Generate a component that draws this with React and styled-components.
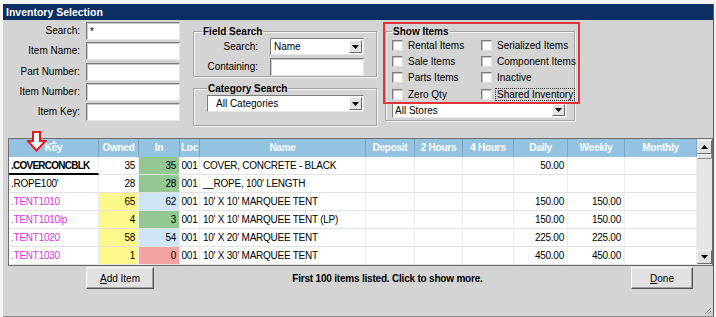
import React from "react";
import styled, { createGlobalStyle } from "styled-components";

const GlobalStyle = createGlobalStyle`
  html, body { margin: 0; padding: 0; background: #f3f3f3; }
  body { font-family: "Liberation Sans", Arial, sans-serif; font-size: 10px; color: #000; }
  * { box-sizing: border-box; }
`;

const Window = styled.div`
  margin: 4px 0 0 3px;
  width: 711px;
  height: 313px;
  background: #d4d4d4;
  border-right: 1px solid #5a5a5a;
  border-bottom: 1px solid #8a8a8a;
  display: flex;
  flex-direction: column;
  position: relative;
`;

const TitleBar = styled.div`
  height: 16px;
  background: #0b2f63;
  color: #fff;
  font-weight: bold;
  font-size: 10.5px;
  line-height: 16px;
  padding-left: 3px;
`;

const TopArea = styled.div`
  display: flex;
  align-items: flex-start;
  padding-top: 2px;
  height: 113px;
`;

const LeftFields = styled.div`
  display: grid;
  grid-template-columns: 77px 94px;
  grid-auto-rows: 18px;
  column-gap: 6px;
  row-gap: 2.3px;
  align-items: center;
`;

const Label = styled.label`
  text-align: right;
  white-space: nowrap;
  line-height: 12px;
`;

const TextBox = styled.input`
  display: block;
  width: 100%;
  height: ${(p) => p.$h || 18}px;
  margin: 0;
  padding: 0 3px;
  font: inherit;
  background: #fff;
  border: 1px solid;
  border-color: #7c7c7c #e6e6e6 #e6e6e6 #7c7c7c;
  box-shadow: inset 1px 1px 0 #c8c8c8;
  outline: none;
`;

const Column = styled.div`
  display: flex;
  flex-direction: column;
  margin-left: ${(p) => p.$ml}px;
  width: ${(p) => p.$w}px;
  position: relative;
`;

const GroupBox = styled.fieldset`
  margin: ${(p) => p.$mt || 0}px 0 0 0;
  padding: ${(p) => p.$pad};
  border: 1px solid #a3a3a3;
  box-shadow: 1px 1px 0 #f4f4f4, inset 1px 1px 0 #f4f4f4;
  min-width: 0;
`;

const Legend = styled.legend`
  font-weight: bold;
  padding: 0 1px;
  line-height: 11px;
`;

const FieldGrid = styled.div`
  display: grid;
  grid-template-columns: 56px 94px;
  grid-template-rows: 17px 18px;
  column-gap: 12px;
  row-gap: 3px;
  align-items: center;
`;

const SelectBox = styled.div`
  width: ${(p) => p.$w}px;
  height: ${(p) => p.$h || 17}px;
  background: #fff;
  border: 1px solid;
  border-color: #7c7c7c #e6e6e6 #e6e6e6 #7c7c7c;
  display: flex;
  align-items: center;
  justify-content: space-between;
  padding: 0 1px 0 ${(p) => p.$pl || 3}px;
`;

const DropButton = styled.span`
  width: 13px;
  height: calc(100% - 2px);
  background: #e2e2e2;
  border: 1px solid;
  border-color: #fafafa #6a6a6a #6a6a6a #fafafa;
  display: flex;
  align-items: center;
  justify-content: center;
`;

const CheckGrid = styled.div`
  display: grid;
  grid-template-columns: 89px 1fr;
  grid-auto-rows: 16.3px;
  align-items: center;
`;

const CheckItem = styled.div`
  display: flex;
  align-items: center;
  gap: 4px;
  white-space: nowrap;
`;

const Box = styled.span`
  width: 11px;
  height: 11px;
  background: #fff;
  border: 1px solid;
  border-color: #7c7c7c #e0e0e0 #e0e0e0 #7c7c7c;
  box-shadow: inset 1px 1px 0 #c4c4c4;
  flex: none;
`;

const CheckText = styled.span`
  outline: ${(p) => (p.$focus ? "1px dotted #333" : "none")};
  padding: 0 1px;
`;

const RedFrame = styled.div`
  position: absolute;
  left: -2px;
  top: 0;
  width: 197px;
  height: 82px;
  border: 2px solid #e2323a;
  pointer-events: none;
`;

const GridPanel = styled.div`
  margin: 5px 0 0 5px;
  width: 705px;
  height: 128px;
  border: 1px solid #6d6d6d;
  background: #fff;
  display: flex;
  position: relative;
  letter-spacing: -0.25px;
`;

const Table = styled.div`
  flex: 1;
  display: flex;
  flex-direction: column;
`;

const cols = "90px 40px 41px 20px 166px 49px 48px 51px 54px 57px 72px";

const HeaderRow = styled.div`
  display: grid;
  grid-template-columns: ${cols};
  height: 18px;
  background: #93c3e0;
`;

const HeaderCell = styled.div`
  color: #fff;
  font-weight: bold;
  text-align: center;
  line-height: 18px;
  border-right: 1px solid #7aa3bf;
  white-space: nowrap;
  overflow: hidden;
  position: relative;
`;

const Row = styled.div`
  display: grid;
  grid-template-columns: ${cols};
  height: 18px;
`;

const Cell = styled.div`
  line-height: 17px;
  border-right: 1px solid #ececec;
  border-bottom: ${(p) => (p.$underline ? "2px solid #000" : "1px solid #e2e2e2")};
  background: ${(p) => p.$bg || "transparent"};
  color: ${(p) => p.$color || "#000"};
  font-weight: ${(p) => (p.$bold ? "bold" : "normal")};
  letter-spacing: ${(p) => (p.$bold ? "-0.75px" : "inherit")};
  text-align: ${(p) => p.$align || "left"};
  padding: ${(p) =>
    p.$align === "right" ? "0 3px 0 0" : p.$align === "center" ? "0" : `0 0 0 ${p.$pl || 3}px`};
  white-space: nowrap;
  overflow: hidden;
`;

const Scrollbar = styled.div`
  width: 15px;
  background: #e6e6e6;
  display: flex;
  flex-direction: column;
  justify-content: space-between;
  padding: 1px 0;
`;

const ScrollTop = styled.div`
  display: flex;
  flex-direction: column;
`;

const ScrollButton = styled.div`
  height: 14px;
  background: #e0e0e0;
  border: 1px solid;
  border-color: #fafafa #6a6a6a #6a6a6a #fafafa;
  display: flex;
  align-items: center;
  justify-content: center;
`;

const Thumb = styled.div`
  height: 5px;
  background: #e4e4e4;
  border: 1px solid;
  border-color: #fafafa #8a8a8a #8a8a8a #fafafa;
`;

const SortArrow = styled.svg`
  position: absolute;
  left: 42px;
  top: 1px;
`;

const RedArrow = styled.svg`
  position: absolute;
  left: 18px;
  top: -8px;
`;

const Footer = styled.div`
  display: flex;
  align-items: center;
  padding: 1px 20px 0 83px;
`;

const Button = styled.button`
  width: ${(p) => p.$w}px;
  height: 22px;
  font: inherit;
  background: #e1e1e1;
  border: 1px solid;
  border-color: #fdfdfd #555 #555 #fdfdfd;
  box-shadow: inset -1px -1px 0 #a0a0a0;
  padding: 0;
  color: #000;
`;

const Status = styled.div`
  flex: 1;
  text-align: center;
  font-weight: bold;
  margin-right: 10px;
  letter-spacing: -0.2px;
`;

const Grip = styled.svg`
  position: absolute;
  right: 1px;
  bottom: 1px;
`;

const Arrow = ({ down }) => (
  <svg width="7" height="4" viewBox="0 0 7 4">
    <path d={down ? "M0 0H7L3.5 4Z" : "M0 4H7L3.5 0Z"} fill="#000" />
  </svg>
);

const headers = ["Key", "Owned", "In", "Loc", "Name", "Deposit", "2 Hours", "4 Hours", "Daily", "Weekly", "Monthly"];

const YEL = "#fcf88c";
const GRN = "#93c893";
const BLU = "#cfe6f6";
const PNK = "#f4a2a2";
const MAG = "#e234e2";

const rows = [
  { key: ".COVERCONCBLK", bold: true, owned: "35", inn: "35", inBg: GRN, name: "COVER, CONCRETE - BLACK", daily: "50.00", weekly: "" },
  { key: ".ROPE100'", owned: "28", inn: "28", inBg: GRN, name: "__ROPE, 100' LENGTH", daily: "", weekly: "" },
  { key: ".TENT1010", color: MAG, owned: "65", ownBg: YEL, inn: "62", inBg: BLU, name: "10' X 10' MARQUEE TENT", daily: "150.00", weekly: "150.00" },
  { key: ".TENT1010lp", color: MAG, owned: "4", ownBg: YEL, inn: "3", inBg: GRN, name: "10' X 10' MARQUEE TENT (LP)", daily: "150.00", weekly: "150.00" },
  { key: ".TENT1020", color: MAG, owned: "58", ownBg: YEL, inn: "54", inBg: BLU, name: "10' X 20' MARQUEE TENT", daily: "225.00", weekly: "225.00" },
  { key: ".TENT1030", color: MAG, owned: "1", ownBg: YEL, inn: "0", inBg: PNK, name: "10' X 30' MARQUEE TENT", daily: "450.00", weekly: "450.00" },
];

const checks = [
  ["Rental Items", "Serialized Items"],
  ["Sale Items", "Component Items"],
  ["Parts Items", "Inactive"],
  ["Zero Qty", "Shared Inventory"],
];

export default function App() {
  return (
    <>
      <GlobalStyle />
      <Window>
        <TitleBar>Inventory Selection</TitleBar>
        <TopArea>
          <LeftFields>
            <Label>Search:</Label>
            <TextBox defaultValue="*" />
            <Label>Item Name:</Label>
            <TextBox />
            <Label>Part Number:</Label>
            <TextBox />
            <Label>Item Number:</Label>
            <TextBox />
            <Label>Item Key:</Label>
            <TextBox />
          </LeftFields>

          <Column $ml={13} $w={184}>
            <GroupBox $mt={4} $pad="1px 12px 0 8px">
              <Legend>Field Search</Legend>
              <FieldGrid>
                <Label>Search:</Label>
                <SelectBox $w={94}>
                  Name
                  <DropButton><Arrow down /></DropButton>
                </SelectBox>
                <Label>Containing:</Label>
                <TextBox $h={18} />
              </FieldGrid>
            </GroupBox>
            <GroupBox $mt={6} $pad="1px 11px 13px 13px">
              <Legend>Category Search</Legend>
              <SelectBox $w={157} $pl={8}>
                All Categories
                <DropButton><Arrow down /></DropButton>
              </SelectBox>
            </GroupBox>
          </Column>

          <Column $ml={8} $w={190}>
            <GroupBox $mt={4} $pad="0 8px 2px 6px">
              <Legend>Show Items</Legend>
              <CheckGrid>
                {checks.map(([a, b]) => (
                  <React.Fragment key={a}>
                    <CheckItem><Box /><CheckText>{a}</CheckText></CheckItem>
                    <CheckItem><Box /><CheckText $focus={b === "Shared Inventory"}>{b}</CheckText></CheckItem>
                  </React.Fragment>
                ))}
              </CheckGrid>
              <SelectBox $w={175} $h={16} $pl={2}>
                All Stores
                <DropButton><Arrow down /></DropButton>
              </SelectBox>
            </GroupBox>
            <RedFrame />
          </Column>
        </TopArea>

        <GridPanel>
          <Table>
            <HeaderRow>
              {headers.map((h) => (
                <HeaderCell key={h}>
                  {h === "Key" && (
                    <SortArrow width="6" height="4" viewBox="0 0 6 4">
                      <path d="M0 4H6L3 0Z" fill="#d8ecf8" />
                    </SortArrow>
                  )}
                  {h}
                </HeaderCell>
              ))}
            </HeaderRow>
            {rows.map((r, i) => (
              <Row key={r.key}>
                <Cell $bold={r.bold} $color={r.color} $underline={i === 0} $pl={2}>{r.key}</Cell>
                <Cell $align="right" $bg={r.ownBg}>{r.owned}</Cell>
                <Cell $align="right" $bg={r.inBg}>{r.inn}</Cell>
                <Cell $align="center">001</Cell>
                <Cell>{r.name}</Cell>
                <Cell />
                <Cell />
                <Cell />
                <Cell $align="right">{r.daily}</Cell>
                <Cell $align="right">{r.weekly}</Cell>
                <Cell />
              </Row>
            ))}
          </Table>
          <Scrollbar>
            <ScrollTop>
              <ScrollButton><Arrow /></ScrollButton>
              <Thumb />
            </ScrollTop>
            <ScrollButton><Arrow down /></ScrollButton>
          </Scrollbar>
          <RedArrow width="20" height="21" viewBox="0 0 20 21">
            <path
              d="M6 1H13V10H18.5L9.5 19.5L0.8 10H6Z"
              fill="#fff"
              stroke="#e01b1b"
              strokeWidth="2"
            />
          </RedArrow>
        </GridPanel>

        <Footer>
          <Button $w={68}><u>A</u>dd Item</Button>
          <Status>First 100 items listed. Click to show more.</Status>
          <Button $w={62}><u>D</u>one</Button>
        </Footer>
        <Grip width="8" height="8" viewBox="0 0 8 8">
          <path d="M7 1L1 7M7 4L4 7M7 6.5L6.5 7" stroke="#8a8a8a" strokeWidth="1" />
        </Grip>
      </Window>
    </>
  );
}
